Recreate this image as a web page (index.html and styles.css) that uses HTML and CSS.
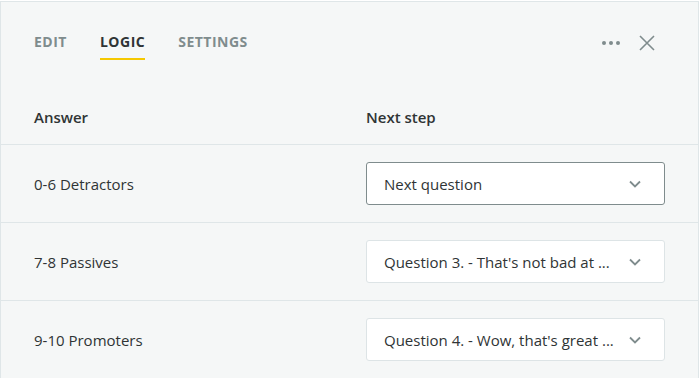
FILE: index.html
```html
<!DOCTYPE html>
<html lang="en">
<head>
<meta charset="utf-8">
<title>Logic</title>
<link rel="stylesheet" href="styles.css">
</head>
<body>
<div class="panel">
  <div class="topbar">
    <nav class="tabs">
      <span class="tab">EDIT</span>
      <span class="tab active">LOGIC</span>
      <span class="tab">SETTINGS</span>
    </nav>
    <div class="actions">
      <svg class="dots" width="18" height="4" viewBox="0 0 18 4"><circle cx="2" cy="2" r="2"/><circle cx="9" cy="2" r="2"/><circle cx="16" cy="2" r="2"/></svg>
      <svg class="close" width="16" height="16" viewBox="0 0 16 16"><path d="M1 1 L15 15 M15 1 L1 15"/></svg>
    </div>
  </div>
  <div class="row head">
    <div>Answer</div>
    <div>Next step</div>
  </div>
  <div class="row">
    <div class="answer">0-6 Detractors</div>
    <div class="select focused"><span>Next question</span><svg class="chev" width="12" height="8" viewBox="0 0 12 8"><path d="M1 1.5 L6 6.5 L11 1.5"/></svg></div>
  </div>
  <div class="row">
    <div class="answer">7-8 Passives</div>
    <div class="select"><span>Question 3. - That's not bad at ...</span><svg class="chev" width="12" height="8" viewBox="0 0 12 8"><path d="M1 1.5 L6 6.5 L11 1.5"/></svg></div>
  </div>
  <div class="row last">
    <div class="answer">9-10 Promoters</div>
    <div class="select"><span>Question 4. - Wow, that's great ...</span><svg class="chev" width="12" height="8" viewBox="0 0 12 8"><path d="M1 1.5 L6 6.5 L11 1.5"/></svg></div>
  </div>
</div>
</body>
</html>
```
FILE: styles.css
```css
* { box-sizing: border-box; }
html, body { margin: 0; padding: 0; background: #ffffff; }
body {
  font-family: "Open Sans", "Noto Sans", sans-serif;
  color: #2f3435;
  font-size: 15px;
  line-height: 20px;
}
.panel {
  width: 699px;
  height: 378px;
  margin-top: 1px;
  background: #f5f7f7;
  border: 1px solid #dfe6e8;
}
.topbar {
  display: flex;
  justify-content: space-between;
  align-items: flex-start;
  padding: 30px 43px 0 33px;
}
.tabs {
  display: flex;
  gap: 33px;
}
.tab {
  font-weight: 700;
  font-size: 14px;
  letter-spacing: 0.5px;
  color: #7f8c8d;
  padding-bottom: 6px;
  border-bottom: 2px solid transparent;
}
.tab.active {
  color: #2f3435;
  border-bottom-color: #f5c800;
}
.actions {
  display: flex;
  align-items: center;
  gap: 19px;
  padding-top: 3px;
}
.dots { fill: #7f8c8d; }
.close { stroke: #7f8c8d; stroke-width: 1.6; fill: none; }
.row {
  display: grid;
  grid-template-columns: 1fr 299px;
  align-items: center;
  padding: 17px 33px;
  border-bottom: 1px solid #dfe6e8;
  height: 78px;
}
.row.last { border-bottom: none; height: 77px; }
.row.head {
  height: auto;
  padding-top: 47px;
  padding-bottom: 17px;
  font-weight: 600;
}
.select {
  height: 43px;
  background: #ffffff;
  border: 1px solid #dde4e6;
  border-radius: 3px;
  display: flex;
  align-items: center;
  justify-content: space-between;
  padding: 0 23px 0 17px;
}
.select.focused { border-color: #7f8c8d; }
.chev { stroke: #7f8c8d; stroke-width: 1.8; fill: none; }
```
